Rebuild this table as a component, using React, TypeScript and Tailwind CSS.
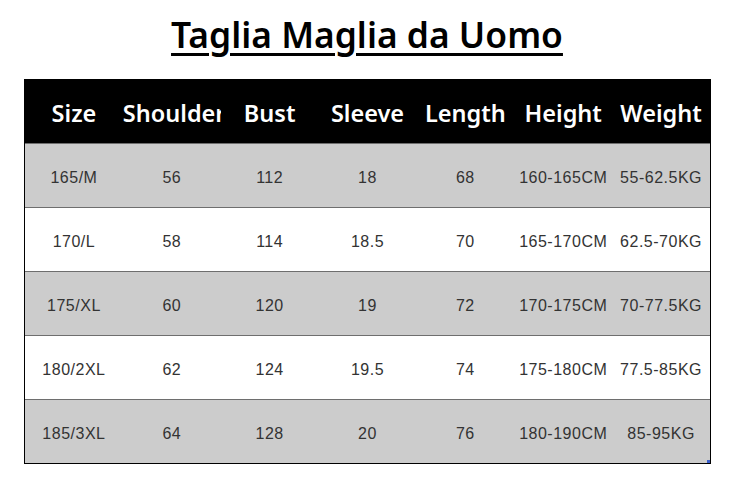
const headers = ["Size", "Shoulder", "Bust", "Sleeve", "Length", "Height", "Weight"];

const rows = [
  ["165/M", "56", "112", "18", "68", "160-165CM", "55-62.5KG"],
  ["170/L", "58", "114", "18.5", "70", "165-170CM", "62.5-70KG"],
  ["175/XL", "60", "120", "19", "72", "170-175CM", "70-77.5KG"],
  ["180/2XL", "62", "124", "19.5", "74", "175-180CM", "77.5-85KG"],
  ["185/3XL", "64", "128", "20", "76", "180-190CM", "85-95KG"],
];

export default function App() {
  return (
    <div className="h-[488px] w-[734px] bg-white">
      <div className="flex h-[79px] justify-center pt-[11px]">
        <h1 className="font-['Noto_Sans',sans-serif] text-[35.4px] font-semibold leading-[46px] text-black underline decoration-[3px] underline-offset-[5px]">
          Taglia Maglia da Uomo
        </h1>
      </div>
      <div className="relative ml-[24px] w-[687px] border border-black">
        <div className="grid h-[63px] grid-cols-7 bg-black">
          {headers.map((h) => (
            <div
              key={h}
              className="overflow-hidden whitespace-nowrap pt-[18px] text-center font-['Noto_Sans',sans-serif] text-[23.5px] font-semibold leading-[30px] text-white"
            >
              {h}
            </div>
          ))}
        </div>
        {rows.map((row, i) => (
          <div
            key={row[0]}
            className={`grid h-[64px] grid-cols-7 items-center border-t border-[#6e6e6e] ${
              i % 2 === 0 ? "bg-[#cccccc]" : "bg-white"
            }`}
          >
            {row.map((cell, j) => (
              <div
                key={j}
                className="whitespace-nowrap pt-[4px] text-center font-['Liberation_Sans',Arial,sans-serif] text-[16px] tracking-[0.5px] text-[#333]"
              >
                {cell}
              </div>
            ))}
          </div>
        ))}
        <div className="absolute bottom-0 right-0 h-[3px] w-[3px] bg-[#3a5fcd]" />
      </div>
    </div>
  );
}
